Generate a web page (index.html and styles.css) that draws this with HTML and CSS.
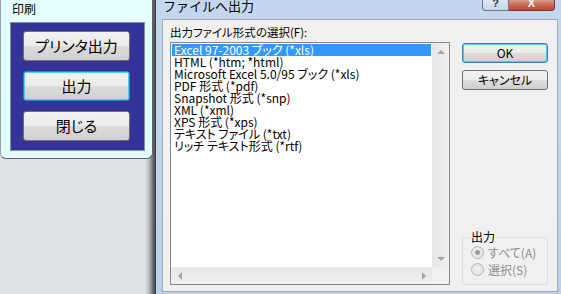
FILE: index.html
```html
<!DOCTYPE html>
<html>
<head>
<meta charset="utf-8">
<meta name="viewport" content="width=device-width, initial-scale=1">
<link rel="stylesheet" href="styles.css">
</head>
<body>

<div class="side">
  <div class="printWin">
    <div class="printTitle">印刷</div>
    <div class="printPanel">
      <button class="printBtn">プリンタ出力</button>
      <button class="printBtn focused">出力</button>
      <button class="printBtn">閉じる</button>
    </div>
  </div>
</div>

<div class="dialog">
  <div class="titleBar">
    <span class="titleText">ファイルへ出力</span>
    <div class="capBtns">
      <div class="capHelp">?</div>
      <div class="capClose">X</div>
    </div>
  </div>
  <div class="client">
    <div class="listArea">
      <div class="listLabel">出力ファイル形式の選択(F):</div>
      <div class="listbox">
        <div class="listMain">
          <div class="rows">
            <div class="item selected">Excel 97-2003 ブック (*xls)</div>
            <div class="item">HTML (*htm; *html)</div>
            <div class="item">Microsoft Excel 5.0/95 ブック (*xls)</div>
            <div class="item">PDF 形式 (*pdf)</div>
            <div class="item">Snapshot 形式 (*snp)</div>
            <div class="item">XML (*xml)</div>
            <div class="item">XPS 形式 (*xps)</div>
            <div class="item">テキスト ファイル (*txt)</div>
            <div class="item">リッチ テキスト形式 (*rtf)</div>
          </div>
          <div class="vscroll">
            <span class="arrUp"></span>
            <span class="arrDown"></span>
          </div>
        </div>
        <div class="hscrollRow">
          <div class="hscroll">
            <span class="arrLeft"></span>
            <span class="arrRight"></span>
          </div>
          <div class="corner"></div>
        </div>
      </div>
    </div>
    <div class="sideArea">
      <button class="dlgBtn defBtn">OK</button>
      <button class="dlgBtn">キャンセル</button>
      <fieldset class="outGroup">
        <legend>出力</legend>
        <div class="radio"><span class="dot on"></span>すべて(A)</div>
        <div class="radio"><span class="dot"></span>選択(S)</div>
      </fieldset>
    </div>
  </div>
</div>

</body>
</html>
```

FILE: styles.css
```css
* {
    box-sizing: border-box;
}

body {
    margin: 0;
    width: 561px;
    height: 294px;
    overflow: hidden;
    display: flex;
    font-family: "Noto Sans CJK JP", "Noto Sans", sans-serif;
    font-size: 12px;
    color: #000;
    background: #dfe3e8;
}

button {
    font-family: inherit;
    padding: 0;
    cursor: default;
}

/* left window */
.side {
    width: 155px;
    flex: none;
    background: linear-gradient(to right, #dfe3e8 0, #dfe3e8 145px, #b9bdc1 149px, #7c7f83 152px, #45484b 155px);
}

.printWin {
    width: 153px;
    height: 159px;
    background: #e3fefe;
    border: 1px solid #5d6166;
    border-top: none;
    border-left-color: #9aa0a6;
    border-radius: 0 0 6px 6px;
    padding: 0 0 0 9px;
}

.printTitle {
    height: 22px;
    padding: 2px 0 0 2px;
    line-height: 13px;
    font-size: 12px;
}

.printPanel {
    width: 135px;
    height: 129px;
    background: #333399;
    border: 1px solid #8a8f99;
    padding: 8px 0 0 12px;
    display: flex;
    flex-direction: column;
    gap: 10px;
}

.printBtn {
    width: 107px;
    height: 30px;
    border: 1px solid #707070;
    border-radius: 3px;
    background: linear-gradient(#f2f2f2 0, #ebebeb 50%, #dddddd 50%, #cfcfcf 100%);
    font-size: 15px;
    font-feature-settings: "palt";
    line-height: 26px;
    color: #000;
}

.printBtn.focused {
    border: 1px solid #3c7fb1;
    box-shadow: inset 0 0 0 1px #48d0f5;
}

/* dialog */
.dialog {
    width: 412px;
    flex: none;
    border-left: 1px solid #3e4146;
    background: linear-gradient(#c3d8ee, #b8d0e9);
    padding: 0 0 3px 6px;
    display: flex;
    flex-direction: column;
}

.titleBar {
    height: 19px;
    display: flex;
    justify-content: space-between;
    flex: none;
}

.titleText {
    font-size: 13px;
    line-height: 13px;
    padding: 0 0 0 1px;
    margin-top: -1px;
}

.capBtns {
    display: flex;
    margin-right: 12px;
    height: 11px;
}

.capHelp {
    width: 27px;
    border: 1px solid #6c7889;
    border-top: none;
    border-radius: 0 0 0 4px;
    background: linear-gradient(#dfe7f1, #c7d5e6);
    font-size: 11px;
    line-height: 6px;
    text-align: center;
    color: #2b3544;
    font-weight: bold;
    font-family: "Liberation Sans", sans-serif;
}

.capClose {
    width: 46px;
    border: 1px solid #6e3a36;
    border-top: none;
    border-left: none;
    border-radius: 0 0 4px 0;
    background: linear-gradient(#db9b8d, #c45e47 60%, #c0492f);
    font-size: 11px;
    line-height: 6px;
    text-align: center;
    color: #fff;
    font-weight: bold;
    font-family: "Liberation Sans", sans-serif;
}

.client {
    width: 396px;
    flex: 1;
    background: #f0f0f0;
    border: 1px solid #a0aab5;
    display: flex;
    padding: 0 9px 6px 7px;
}

.listArea {
    width: 280px;
    padding-top: 5px;
    display: flex;
    flex-direction: column;
}

.listLabel {
    height: 14px;
    line-height: 14px;
    margin-bottom: 3px;
    font-size: 11.5px;
    font-feature-settings: "palt";
}

.listbox {
    height: 243px;
    border: 1px solid #828790;
    background: #fff;
    display: flex;
    flex-direction: column;
}

.listMain {
    flex: 1;
    display: flex;
}

.rows {
    flex: 1;
    padding: 1px 1px 0 1px;
}

.item {
    height: 12px;
    line-height: 12px;
    padding-left: 2px;
    font-size: 12px;
    white-space: nowrap;
    font-feature-settings: "palt";
}

.item.selected {
    background: #3399ff;
    color: #fff;
}

.vscroll {
    width: 17px;
    background: linear-gradient(to right, #e6e6e6, #f0f0f0);
    display: flex;
    flex-direction: column;
    justify-content: space-between;
    align-items: center;
    padding: 7px 0 6px;
}

.arrUp {
    border-left: 4px solid transparent;
    border-right: 4px solid transparent;
    border-bottom: 4px solid #a5a5a5;
}

.arrDown {
    border-left: 4px solid transparent;
    border-right: 4px solid transparent;
    border-top: 4px solid #a5a5a5;
}

.hscrollRow {
    height: 17px;
    display: flex;
}

.hscroll {
    flex: 1;
    background: linear-gradient(#e6e6e6, #f0f0f0);
    display: flex;
    justify-content: space-between;
    align-items: center;
    padding: 0 6px 0 7px;
}

.arrLeft {
    border-top: 4px solid transparent;
    border-bottom: 4px solid transparent;
    border-right: 4px solid #a5a5a5;
}

.arrRight {
    border-top: 4px solid transparent;
    border-bottom: 4px solid transparent;
    border-left: 4px solid #a5a5a5;
}

.corner {
    width: 17px;
    background: #f0f0f0;
}

.sideArea {
    width: 86px;
    margin-left: 12px;
    padding-top: 23px;
    display: flex;
    flex-direction: column;
}

.dlgBtn {
    height: 20px;
    border: 1px solid #707070;
    border-radius: 3px;
    background: linear-gradient(#f2f2f2 0, #ebebeb 50%, #dddddd 50%, #cfcfcf 100%);
    font-size: 12px;
    line-height: 16px;
    font-feature-settings: "palt";
    color: #000;
    margin-bottom: 7px;
}

.defBtn {
    border-color: #3c7fb1;
    box-shadow: inset 0 0 0 1px #48d0f5;
}

.outGroup {
    margin: auto 0 0 0;
    height: 54px;
    border: 1px solid #d5dfe5;
    border-radius: 3px;
    padding: 1px 0 0 8px;
}

.outGroup legend {
    padding: 0 1px;
    margin-left: -1px;
    line-height: 12px;
    font-feature-settings: "palt";
}

.radio {
    height: 17px;
    display: flex;
    align-items: center;
    color: #8d8d8d;
    font-feature-settings: "palt";
}

.dot {
    width: 13px;
    height: 13px;
    border-radius: 50%;
    border: 1px solid #b8b8b8;
    background: radial-gradient(#f4f4f4, #dedede);
    margin-right: 4px;
    display: flex;
    align-items: center;
    justify-content: center;
}

.dot.on::after {
    content: "";
    width: 5px;
    height: 5px;
    border-radius: 50%;
    background: #9a9a9a;
}
```
